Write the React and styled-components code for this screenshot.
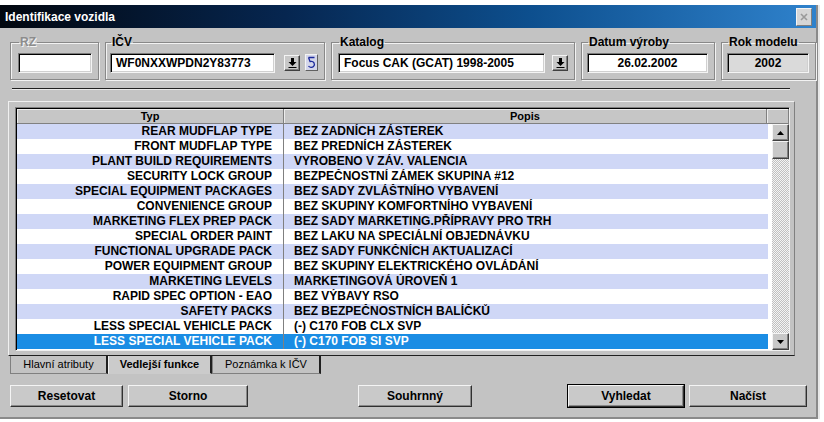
import React from 'react'
import styled, { createGlobalStyle } from 'styled-components'

const Global = createGlobalStyle`
  html, body { margin: 0; padding: 0; background: #fff; }
  body { font-family: "Liberation Sans", Arial, sans-serif; }
`

const rows = [
  ['REAR MUDFLAP TYPE', 'BEZ ZADNÍCH ZÁSTEREK'],
  ['FRONT MUDFLAP TYPE', 'BEZ PREDNÍCH ZÁSTEREK'],
  ['PLANT BUILD REQUIREMENTS', 'VYROBENO V ZÁV. VALENCIA'],
  ['SECURITY LOCK GROUP', 'BEZPEČNOSTNÍ ZÁMEK SKUPINA #12'],
  ['SPECIAL EQUIPMENT PACKAGES', 'BEZ SADY ZVLÁŠTNÍHO VYBAVENÍ'],
  ['CONVENIENCE GROUP', 'BEZ SKUPINY KOMFORTNÍHO VYBAVENÍ'],
  ['MARKETING FLEX PREP PACK', 'BEZ SADY MARKETING.PŘÍPRAVY PRO TRH'],
  ['SPECIAL ORDER PAINT', 'BEZ LAKU NA SPECIÁLNÍ OBJEDNÁVKU'],
  ['FUNCTIONAL UPGRADE PACK', 'BEZ SADY FUNKČNÍCH AKTUALIZACÍ'],
  ['POWER EQUIPMENT GROUP', 'BEZ SKUPINY ELEKTRICKÉHO OVLÁDÁNÍ'],
  ['MARKETING LEVELS', 'MARKETINGOVÁ ÚROVEŇ 1'],
  ['RAPID SPEC OPTION - EAO', 'BEZ VÝBAVY RSO'],
  ['SAFETY PACKS', 'BEZ BEZPEČNOSTNÍCH BALÍČKŮ'],
  ['LESS SPECIAL VEHICLE PACK', '(-) C170 FOB CLX SVP'],
  ['LESS SPECIAL VEHICLE PACK', '(-) C170 FOB SI SVP'],
]

const Page = styled.div`
  padding-top: 5px;
`

const Window = styled.div`
  width: 816px;
  height: 412px;
  background: #c3c3c3;
  border-right: 2px solid #8a8a8a;
  border-bottom: 2px solid #8a8a8a;
  box-shadow: 2px 0 0 #e8e8e8;
  display: flex;
  flex-direction: column;
`

const TitleBar = styled.div`
  height: 23px;
  display: flex;
  align-items: center;
  justify-content: space-between;
  padding: 0 4px 0 5px;
  background: linear-gradient(to right, #02070f 0%, #062650 35%, #0d4f8e 65%, #2f82cc 100%);
  color: #fff;
  font-weight: bold;
  font-size: 12px;
`

const CloseBtn = styled.div`
  width: 14px;
  height: 16px;
  background: #d6d6d6;
  border: 1px solid;
  border-color: #f4f4f4 #808080 #808080 #f4f4f4;
  display: flex;
  align-items: center;
  justify-content: center;
`

const Body = styled.div`
  padding: 8px 0 0 8px;
  display: flex;
  flex-direction: column;
`

const TopRow = styled.div`
  display: flex;
  gap: 6px;
  padding-left: 2px;
`

const Group = styled.fieldset`
  margin: 0;
  width: ${p => p.$w}px;
  box-sizing: border-box;
  height: 44px;
  padding: 0 6px 2px ${p => p.$pl || 7}px;
  border: 1px solid #888;
  box-shadow: inset 1px 1px 0 #f2f2f2, 1px 1px 0 #f2f2f2;
  display: flex;
  align-items: center;
`

const Legend = styled.legend`
  font-size: 12px;
  font-weight: bold;
  padding: 0 1px;
  margin-left: 1px;
  color: ${p => (p.$disabled ? '#8c8c8c' : '#000')};
  text-shadow: ${p => (p.$disabled ? '1px 1px 0 #f4f4f4' : 'none')};
  line-height: 12px;
`

const Input = styled.div`
  width: ${p => p.$w}px;
  height: 20px;
  box-sizing: border-box;
  background: ${p => (p.$gray ? '#dadada' : '#fff')};
  border: 1px solid;
  border-color: #7a7a7a #f4f4f4 #f4f4f4 #7a7a7a;
  box-shadow: inset 1px 1px 0 #000, inset -1px -1px 0 #d0d0d0;
  font-size: 12px;
  font-weight: bold;
  line-height: 18px;
  padding: 0 5px;
  text-align: ${p => (p.$center ? 'center' : 'left')};
  white-space: nowrap;
  overflow: hidden;
`

const DropBtn = styled.div`
  width: 16px;
  height: 16px;
  box-sizing: border-box;
  margin-left: ${p => p.$ml}px;
  background: #c8c8c8;
  border: 1px solid;
  border-color: #f4f4f4 #404040 #404040 #f4f4f4;
  box-shadow: inset -1px -1px 0 #808080;
  display: flex;
  align-items: center;
  justify-content: center;
`

const RefreshBtn = styled.div`
  width: 13px;
  height: 17px;
  box-sizing: border-box;
  margin-left: 5px;
  background: #d4d6ea;
  border: 1px solid;
  border-color: #f4f4f4 #606060 #606060 #f4f4f4;
  display: flex;
  align-items: center;
  justify-content: center;
`

const Separator = styled.div`
  width: 778px;
  margin: 8px 0 0 4px;
  height: 1px;
  background: #202020;
  box-shadow: 0 1px 0 #e8e8e8;
`

const Panel = styled.div`
  margin-top: 12px;
  width: 787px;
  height: 255px;
  box-sizing: border-box;
  border: 1px solid;
  border-color: #f0f0f0 #808080 #202020 #f0f0f0;
  padding: 5px 0 0 6px;
`

const Frame = styled.div`
  width: 775px;
  height: 244px;
  box-sizing: border-box;
  border: 1px solid;
  border-color: #808080 #f0f0f0 #f0f0f0 #808080;
  box-shadow: inset 1px 1px 0 #000;
  background: #fff;
  display: flex;
  flex-direction: column;
  padding: 1px 0 0 1px;
`

const HeaderRow = styled.div`
  display: flex;
  height: 15px;
`

const HeadCell = styled.div`
  width: ${p => p.$w}px;
  flex: ${p => (p.$w ? 'none' : 1)};
  box-sizing: border-box;
  background: #c6c6c6;
  border-right: 1px solid #808080;
  border-bottom: 1px solid #808080;
  box-shadow: inset 1px 1px 0 #ececec;
  font-size: 11px;
  font-weight: bold;
  text-align: center;
  line-height: 14px;
`

const Grid = styled.div`
  flex: 1;
  display: flex;
  min-height: 0;
`

const RowsArea = styled.div`
  flex: 1;
  padding-right: 4px;
`

const Row = styled.div`
  display: grid;
  grid-template-columns: 266px 1fr;
  height: 15px;
  background: ${p => (p.$sel ? '#1b8de4' : p.$alt ? '#cfd7f6' : '#fff')};
  color: ${p => (p.$sel ? '#fff' : '#000')};
  font-size: 12px;
  font-weight: bold;
  line-height: 15px;
  white-space: nowrap;
`

const TypeCell = styled.div`
  text-align: right;
  padding-right: 11px;
  overflow: hidden;
`

const DescCell = styled.div`
  border-left: 1px solid #808080;
  padding-left: 10px;
  overflow: hidden;
`

const Scrollbar = styled.div`
  width: 17px;
  display: flex;
  flex-direction: column;
  background: repeating-conic-gradient(#c0c0c0 0 25%, #f4f4f4 0 50%) 0 0 / 2px 2px;
`

const ScrollBtn = styled.div`
  height: ${p => p.$h || 17}px;
  box-sizing: border-box;
  background: #c8c8c8;
  border: 1px solid;
  border-color: #f4f4f4 #404040 #404040 #f4f4f4;
  box-shadow: inset -1px -1px 0 #808080;
  display: flex;
  align-items: center;
  justify-content: center;
`

const Track = styled.div`
  flex: 1;
`

const Tabs = styled.div`
  display: flex;
  margin-left: 2px;
  height: 18px;
`

const Tab = styled.div`
  width: ${p => p.$w}px;
  box-sizing: border-box;
  font-size: 11px;
  font-weight: ${p => (p.$active ? 'bold' : 'normal')};
  line-height: 16px;
  text-align: center;
  background: ${p => (p.$active ? '#cbcbcb' : '#c3c3c3')};
  border-left: 1px solid ${p => (p.$active ? '#f0f0f0' : '#808080')};
  border-right: 2px solid #202020;
  border-bottom: 1px solid ${p => (p.$active ? 'transparent' : '#808080')};
`

const Buttons = styled.div`
  display: flex;
  align-items: center;
  margin-top: 11px;
  padding-left: 2px;
  gap: 5px;
`

const Button = styled.div`
  width: ${p => p.$w}px;
  height: 22px;
  box-sizing: border-box;
  margin-left: ${p => p.$ml || 0}px;
  background: #c9c9c9;
  border: 1px solid;
  border-color: #f4f4f4 #303030 #303030 #f4f4f4;
  box-shadow: inset -1px -1px 0 #888 ${p => (p.$def ? ', 0 0 0 1px #000' : '')};
  font-size: 12px;
  font-weight: bold;
  line-height: 20px;
  text-align: center;
`

const DownArrow = () => (
  <svg width="9" height="10" viewBox="0 0 9 10">
    <path d="M3 0h3v4h2.5L4.5 8 0.5 4H3z" fill="#000" />
    <rect x="0.5" y="9" width="8" height="1" fill="#000" />
  </svg>
)

const RefreshIcon = () => (
  <svg width="9" height="13" viewBox="0 0 9 13">
    <path d="M1.5 1.5 L7.5 1.5 M1.5 1.5 L3 5.5 C7 4.5 8.5 8.5 6.5 10.5 C5 12 2.5 11.5 1.5 10" fill="none" stroke="#1c2a9c" strokeWidth="1.3" />
  </svg>
)

const Triangle = ({ up }) => (
  <svg width="7" height="4" viewBox="0 0 7 4">
    <path d={up ? 'M3.5 0L7 4H0z' : 'M0 0h7L3.5 4z'} fill="#000" />
  </svg>
)

export default function App() {
  return (
    <Page>
      <Global />
      <Window>
        <TitleBar>
          <span>Identifikace vozidla</span>
          <CloseBtn>
            <svg width="8" height="8" viewBox="0 0 8 8">
              <path d="M1 1L7 7M7 1L1 7" stroke="#9a9a9a" strokeWidth="1.6" />
            </svg>
          </CloseBtn>
        </TitleBar>
        <Body>
          <TopRow>
            <Group $w={90}>
              <Legend $disabled>RZ</Legend>
              <Input $w={74} />
            </Group>
            <Group $w={218} $pl={4}>
              <Legend>IČV</Legend>
              <Input $w={165}>WF0NXXWPDN2Y83773</Input>
              <DropBtn $ml={9}><DownArrow /></DropBtn>
              <RefreshBtn><RefreshIcon /></RefreshBtn>
            </Group>
            <Group $w={244} $pl={6}>
              <Legend>Katalog</Legend>
              <Input $w={207}>Focus CAK (GCAT) 1998-2005</Input>
              <DropBtn $ml={7}><DownArrow /></DropBtn>
            </Group>
            <Group $w={133} $pl={5}>
              <Legend>Datum výroby</Legend>
              <Input $w={121} $center>26.02.2002</Input>
            </Group>
            <Group $w={94} $pl={5}>
              <Legend>Rok modelu</Legend>
              <Input $w={82} $center $gray>2002</Input>
            </Group>
          </TopRow>
          <Separator />
          <Panel>
            <Frame>
              <HeaderRow>
                <HeadCell $w={267}>Typ</HeadCell>
                <HeadCell>Popis</HeadCell>
                <HeadCell $w={22} />
              </HeaderRow>
              <Grid>
                <RowsArea>
                  {rows.map(([t, d], i) => (
                    <Row key={i} $alt={i % 2 === 0} $sel={i === rows.length - 1}>
                      <TypeCell>{t}</TypeCell>
                      <DescCell>{d}</DescCell>
                    </Row>
                  ))}
                </RowsArea>
                <Scrollbar>
                  <ScrollBtn><Triangle up /></ScrollBtn>
                  <ScrollBtn $h={18} />
                  <Track />
                  <ScrollBtn><Triangle /></ScrollBtn>
                </Scrollbar>
              </Grid>
            </Frame>
          </Panel>
          <Tabs>
            <Tab $w={98}>Hlavní atributy</Tab>
            <Tab $w={104} $active>Vedlejší funkce</Tab>
            <Tab $w={109}>Poznámka k IČV</Tab>
          </Tabs>
          <Buttons>
            <Button $w={113}>Resetovat</Button>
            <Button $w={120}>Storno</Button>
            <Button $w={114} $ml={105}>Souhrnný</Button>
            <Button $w={116} $ml={91} $def>Vyhledat</Button>
            <Button $w={118}>Načíst</Button>
          </Buttons>
        </Body>
      </Window>
    </Page>
  )
}
